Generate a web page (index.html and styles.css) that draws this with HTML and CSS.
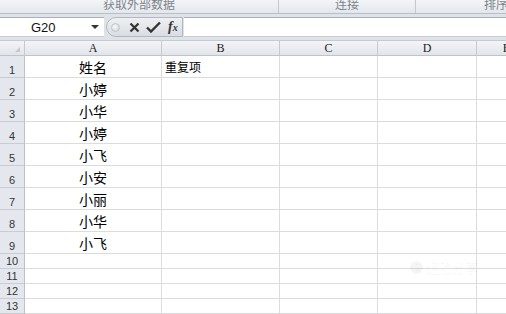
FILE: index.html
```html
<!DOCTYPE html>
<html lang="zh-CN">
<head>
    <meta charset="UTF-8">
    <title>Excel</title>
    <link rel="stylesheet" href="styles.css">
</head>
<body>
    <div class="ribbon">
        <div class="group g1"><span>获取外部数据</span></div>
        <div class="group g2"><span>连接</span></div>
        <div class="group g3"><span>排序</span></div>
    </div>

    <div class="formula-row">
        <div class="name-box">
            <span class="ref">G20</span>
            <span class="drop"></span>
        </div>
        <div class="buttons">
            <span class="dot"></span>
            <svg class="ico" width="11" height="11" viewBox="0 0 11 11">
                <path d="M1.5 1.5 L9.5 9.5 M9.5 1.5 L1.5 9.5" stroke="#333" stroke-width="2.2" fill="none"/>
            </svg>
            <svg class="ico" width="15" height="12" viewBox="0 0 15 12">
                <path d="M1 6.5 L5 10.5 L14 1.5" stroke="#333" stroke-width="2.4" fill="none"/>
            </svg>
            <span class="fx">f<small>x</small></span>
        </div>
        <div class="formula-input"></div>
    </div>

    <div class="sheet">
        <div class="hd corner"><span class="tri"></span></div>
        <div class="hd">A</div>
        <div class="hd">B</div>
        <div class="hd">C</div>
        <div class="hd">D</div>
        <div class="hd">E</div>

        <div class="rh">1</div><div class="c ca">姓名</div><div class="c cb">重复项</div><div class="c"></div><div class="c"></div><div class="c"></div>
        <div class="rh">2</div><div class="c ca">小婷</div><div class="c"></div><div class="c"></div><div class="c"></div><div class="c"></div>
        <div class="rh">3</div><div class="c ca">小华</div><div class="c"></div><div class="c"></div><div class="c"></div><div class="c"></div>
        <div class="rh">4</div><div class="c ca">小婷</div><div class="c"></div><div class="c"></div><div class="c"></div><div class="c"></div>
        <div class="rh">5</div><div class="c ca">小飞</div><div class="c"></div><div class="c"></div><div class="c"></div><div class="c"></div>
        <div class="rh">6</div><div class="c ca">小安</div><div class="c"></div><div class="c"></div><div class="c"></div><div class="c"></div>
        <div class="rh">7</div><div class="c ca">小丽</div><div class="c"></div><div class="c"></div><div class="c"></div><div class="c"></div>
        <div class="rh">8</div><div class="c ca">小华</div><div class="c"></div><div class="c"></div><div class="c"></div><div class="c"></div>
        <div class="rh">9</div><div class="c ca">小飞</div><div class="c"></div><div class="c"></div><div class="c"></div><div class="c"></div>
        <div class="rh">10</div><div class="c"></div><div class="c"></div><div class="c"></div><div class="c"></div><div class="c"></div>
        <div class="rh">11</div><div class="c"></div><div class="c"></div><div class="c"></div><div class="c"></div><div class="c"></div>
        <div class="rh">12</div><div class="c"></div><div class="c"></div><div class="c"></div><div class="c"></div><div class="c"></div>
        <div class="rh">13</div><div class="c"></div><div class="c"></div><div class="c"></div><div class="c"></div><div class="c"></div>
    </div>

    <!-- watermark -->
    <div class="watermark">
        <div class="wm-top"><span class="wm-logo">G</span>经验分享</div>
        <div class="wm-sub">JINGYAN.BAIDU.COM</div>
    </div>
</body>
</html>
```

FILE: styles.css
```css
body {
    margin: 0;
    width: 506px;
    height: 314px;
    overflow: hidden;
    background: #fff;
    font-family: "Liberation Sans", "Noto Sans CJK SC", sans-serif;
    position: relative;
}
.ribbon {
    display: flex;
    height: 13px;
    background: linear-gradient(#f3f5f8, #e3e7ec);
    border-bottom: 1px solid #b9bfc8;
    overflow: hidden;
}
.group {
    flex: none;
    text-align: center;
    border-right: 1px solid #c3c8cf;
    color: #7d828a;
    font-family: "Noto Sans CJK SC", sans-serif;
    font-size: 12px;
    line-height: 12px;
}
.group span {
    display: block;
    margin-top: -2px;
}
.g1 { width: 278px; }
.g2 { width: 136px; }
.g3 { width: 160px; border-right: none; }

.formula-row {
    display: flex;
    height: 20px;
    padding: 3px 0;
    background: #dfe3e8;
}
.name-box {
    width: 104px;
    display: flex;
    align-items: center;
    background: #fff;
    border-top: 1px solid #aab0b9;
    border-bottom: 1px solid #c9ced5;
    box-sizing: border-box;
}
.ref {
    margin-left: 31px;
    font-size: 13px;
    color: #111;
    flex: 1;
}
.drop {
    width: 0;
    height: 0;
    border-left: 4px solid transparent;
    border-right: 4px solid transparent;
    border-top: 4px solid #333;
    margin-right: 5px;
}
.buttons {
    width: 77px;
    margin-left: 2px;
    display: flex;
    align-items: center;
    gap: 6px;
    background: linear-gradient(#eef0f3, #d9dde3);
    border: 1px solid #b2b8c1;
    border-radius: 10px 0 0 10px;
    box-sizing: border-box;
    padding-left: 4px;
}
.dot {
    width: 7px;
    height: 7px;
    border-radius: 50%;
    background: radial-gradient(circle at 40% 40%, #fafafa, #c9cdd3);
    border: 1px solid #c0c5cc;
    margin-right: 3px;
}
.fx {
    font-family: "Liberation Serif", serif;
    font-style: italic;
    font-weight: bold;
    font-size: 14px;
    color: #333;
    margin-left: 1px;
}
.fx small {
    font-size: 10px;
}
.formula-input {
    flex: 1;
    margin-left: 1px;
    background: #fff;
    border-top: 1px solid #aab0b9;
    border-bottom: 1px solid #c9ced5;
    box-sizing: border-box;
}

.sheet {
    display: grid;
    grid-template-columns: 25px 137px 118px 98px 99px 60px;
    grid-template-rows: 16px repeat(9, 22px) repeat(4, 15px);
}
.hd {
    background: linear-gradient(#f3f4f7, #e1e5ea);
    border-right: 1px solid #c5cad1;
    border-bottom: 1px solid #bfc4cb;
    border-top: 1px solid #c5cad1;
    box-sizing: border-box;
    text-align: center;
    font-family: "Liberation Serif", serif;
    font-size: 12px;
    line-height: 14px;
    color: #222;
}
.corner {
    position: relative;
}
.tri {
    position: absolute;
    right: 4px;
    bottom: 3px;
    width: 0;
    height: 0;
    border-left: 5px solid transparent;
    border-bottom: 5px solid #c3c7cd;
}
.rh {
    background: #e4e8ee;
    border-right: 1px solid #bcc1c9;
    border-bottom: 1px solid #c8cdd4;
    box-sizing: border-box;
    display: flex;
    align-items: flex-end;
    justify-content: center;
    padding-bottom: 1px;
    font-size: 11px;
    color: #333;
}
.c {
    border-right: 1px solid #dadcdd;
    border-bottom: 1px solid #dadcdd;
    box-sizing: border-box;
    display: flex;
    align-items: flex-end;
    padding: 0 3px 2px;
    font-family: "Noto Sans CJK SC", sans-serif;
    color: #000;
    line-height: 16px;
}
.ca {
    justify-content: center;
    font-size: 14px;
}
.cb {
    font-size: 12px;
}

.watermark {
    position: absolute;
    left: 410px;
    top: 258px;
    color: rgba(0, 0, 0, 0.04);
    font-family: "Noto Sans CJK SC", sans-serif;
}
.wm-top {
    font-size: 13px;
    display: flex;
    align-items: center;
    gap: 3px;
}
.wm-logo {
    width: 13px;
    height: 13px;
    border-radius: 50%;
    background: rgba(0, 0, 0, 0.04);
    font-size: 9px;
    text-align: center;
    line-height: 13px;
}
.wm-sub {
    font-size: 7px;
    margin-top: 2px;
}
```
